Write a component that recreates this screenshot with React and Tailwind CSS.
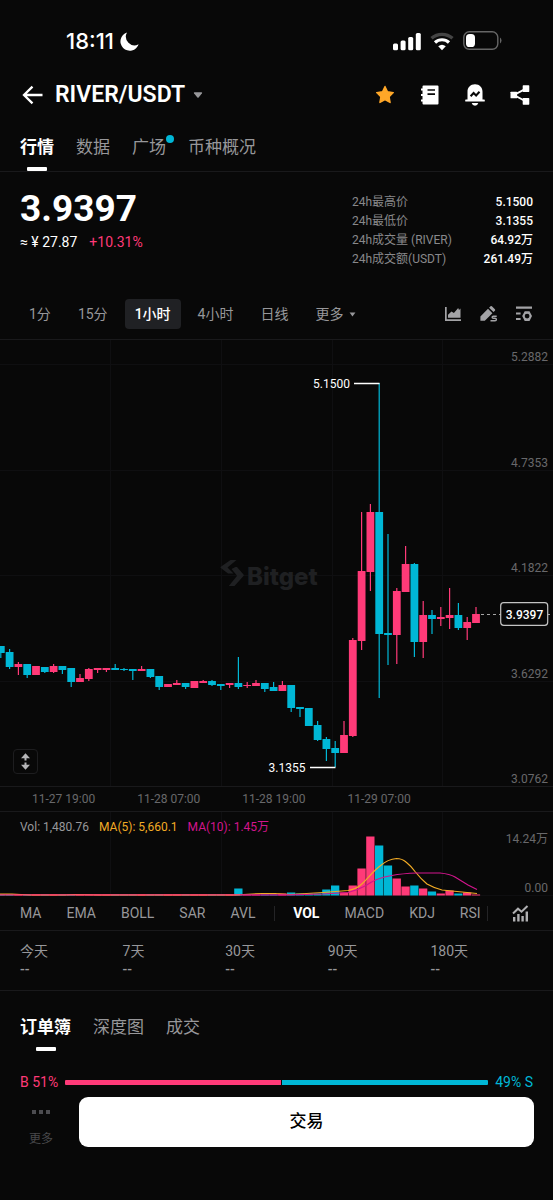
import { useState } from "react";

const UP = "#ff3a78";
const DOWN = "#00b7d6";
const STEP = 8.8;

// [up?, high, open/close top, open/close bottom, low, volume]
const candles = [
  [0, 307, 307, 314, 319, 1],
  [0, 310, 313, 328, 330, 1],
  [1, 323, 325, 328, 336, 1],
  [0, 325, 325, 336, 339, 1],
  [1, 327, 327, 336, 336, 1],
  [0, 328, 328, 333, 334, 1],
  [1, 325, 327, 333, 334, 1],
  [0, 327, 327, 331, 335, 1],
  [0, 329, 329, 343, 348, 1],
  [1, 335, 339, 343, 343, 1],
  [1, 329, 330, 340, 342, 1],
  [1, 329, 329, 331, 334, 1],
  [1, 329, 329, 331, 333, 1],
  [0, 325, 329, 331, 331, 1],
  [0, 329, 330, 331, 332, 1],
  [0, 330, 330, 332, 341, 1],
  [1, 327, 330, 332, 332, 1],
  [0, 330, 330, 338, 339, 1],
  [0, 337, 337, 348, 351, 1],
  [1, 345, 345, 348, 348, 1],
  [1, 341, 344, 346, 346, 1],
  [0, 344, 344, 348, 350, 1],
  [1, 342, 342, 349, 349, 1],
  [1, 341, 342, 344, 344, 1],
  [0, 341, 342, 346, 347, 1],
  [0, 345, 345, 347, 351, 1],
  [1, 344, 344, 346, 349, 1],
  [0, 318, 344, 348, 350, 7],
  [1, 343, 346, 347, 349, 1],
  [1, 341, 344, 347, 347, 1],
  [0, 344, 344, 350, 353, 1],
  [0, 343, 348, 352, 352, 1],
  [1, 342, 346, 352, 352, 2],
  [0, 346, 346, 369, 373, 3],
  [0, 368, 368, 370, 378, 2],
  [0, 369, 369, 387, 387, 2],
  [0, 382, 386, 401, 402, 2],
  [0, 398, 400, 410, 422, 6],
  [0, 402, 409, 414, 428, 10],
  [1, 382, 396, 414, 414, 3],
  [1, 299, 301, 397, 398, 10],
  [1, 173, 232, 302, 311, 27],
  [1, 165, 173, 233, 252, 59],
  [0, 44, 173, 295, 359, 50],
  [0, 195, 294, 296, 326, 30],
  [1, 249, 252, 296, 325, 17],
  [1, 207, 225, 253, 253, 9],
  [0, 224, 225, 303, 318, 10],
  [1, 262, 276, 303, 319, 7],
  [0, 271, 276, 280, 295, 4],
  [1, 268, 278, 280, 287, 2],
  [1, 249, 276, 279, 290, 5],
  [0, 264, 276, 289, 291, 2],
  [1, 278, 283, 289, 301, 3],
  [1, 268, 275, 284, 284, 1],
];

const intervals = ["1分", "15分", "1小时", "4小时", "日线"];

const stats = [
  { label: "24h最高价", value: "5.1500" },
  { label: "24h最低价", value: "3.1355" },
  { label: "24h成交量 (RIVER)", value: "64.92万" },
  { label: "24h成交额(USDT)", value: "261.49万" },
];

const priceLevels = [
  { label: "5.2882", y: 25 },
  { label: "4.7353", y: 131 },
  { label: "4.1822", y: 236 },
  { label: "3.6292", y: 342 },
  { label: "3.0762", y: 447 },
];

const StatusBar = () => (
  <div className="flex h-[68px] items-center justify-between pt-[14px] pr-[51px] pl-[66px]">
    <div className="flex items-center gap-[6px]">
      <span className="font-[Inter] text-[22px] leading-6 font-medium">
        18:11
      </span>
      <svg width="19" height="19" viewBox="0 0 19 19" fill="white">
        <path d="M7 0.5A9.3 9.3 0 1 0 18.6 12.2 8.6 8.6 0 0 1 7 0.5Z" />
      </svg>
    </div>
    <div className="flex items-center gap-[9px]">
      <svg width="28" height="19" viewBox="0 0 28 19" fill="white">
        <rect x="0" y="11.5" width="5" height="6.8" rx="1.5" />
        <rect x="7.6" y="8.5" width="5" height="9.8" rx="1.5" />
        <rect x="15.2" y="5" width="5" height="13.3" rx="1.5" />
        <rect x="22.8" y="1" width="5" height="17.3" rx="1.5" />
      </svg>
      <svg width="24" height="19" viewBox="0 0 24 19" fill="none">
        <path d="M1.500 6.300C7.500 1 16.500 1 22.500 6.300" stroke="#444" strokeWidth="3.400" />
        <path d="M5 10.500C9 6.800 15 6.800 19 10.500" stroke="white" strokeWidth="3.200" />
        <path d="M8.200 14.300Q12 11.300 15.800 14.300L12 18.300Z" fill="white" />
      </svg>
      <svg width="39" height="20" viewBox="0 0 39 20" fill="none">
        <rect x="0.8" y="0.8" width="34" height="17.500" rx="5.500" stroke="#666" strokeWidth="1.400" />
        <rect x="3" y="3" width="9" height="13" rx="3.600" fill="white" />
        <path d="M37 6.500v6q1.500-.8 1.500-3T37 6.500Z" fill="#666" />
      </svg>
    </div>
  </div>
);

const Header = () => (
  <header className="flex h-[54px] items-center justify-between pr-[23px] pl-[22px]">
    <div className="flex items-center">
      <button type="button" aria-label="返回" className="mr-3">
        <svg width="21" height="20" viewBox="0 0 21 20" fill="none" stroke="white" strokeWidth="2.300">
          <path d="M20.500 10H2.500M10.500 1.600 2 10l8.500 8.400" />
        </svg>
      </button>
      <h1 className="text-[23px] leading-7 font-semibold">RIVER/USDT</h1>
      <button type="button" aria-label="切换交易对" className="ml-2">
        <svg width="10" height="8" viewBox="0 0 11 8" fill="#97979a">
          <path d="M1.500 1h8q1 .3.400 1.100L6.200 6.700q-.7.700-1.400 0L1.100 2.100Q.5 1.300 1.500 1Z" />
        </svg>
      </button>
    </div>
    <div className="flex items-center gap-[25px]">
      <button type="button" aria-label="收藏">
        <svg width="20" height="20" viewBox="0 0 20 20" fill="#ffa728" stroke="#ffa728" strokeWidth="1.400" strokeLinejoin="round">
          <path d="M10 1.500l2.500 5.300 5.800.8-4.200 4.100 1 5.800-5.100-2.800-5.100 2.800 1-5.800-4.200-4.100 5.800-.8Z" />
        </svg>
      </button>
      <button type="button" aria-label="资料">
        <svg width="20" height="20" viewBox="0 0 20 20">
          <path d="M3.500.5h14q1 0 1 1v17q0 1-1 1h-14q-1 0-1-1v-2h-1.500v-2h1.500v-3.500h-1.500v-2h1.500v-3.500h-1.500v-2h1.500v-2q0-1 1-1Z" fill="white" />
          <path d="M7.500 5h7.500M7.500 9.200h7.500" stroke="#080808" strokeWidth="1.700" />
        </svg>
      </button>
      <button type="button" aria-label="价格提醒">
        <svg width="20" height="22" viewBox="0 0 20 22">
          <path d="M10 .3c-4.600 0-7.500 3.200-7.500 7.500v7.800h-1.700q-.6 0-.6.600v.8q0 .6.600.6h18.400q.6 0 .6-.6v-.8q0-.6-.6-.6h-1.700v-7.800c0-4.300-2.900-7.500-7.500-7.500Z" fill="white" />
          <path d="M6.700 19h6.600q-.7 2.700-3.300 2.700T6.700 19Z" fill="white" />
          <path d="M5.600 12.200l3-3.200 2.500 2.500 3.400-3.700" fill="none" stroke="#080808" strokeWidth="2" />
        </svg>
      </button>
      <button type="button" aria-label="分享">
        <svg width="20" height="20" viewBox="0 0 20 20">
          <path d="M16 3.700 4 10l12 6.500" fill="none" stroke="white" strokeWidth="1.900" />
          <g fill="white">
            <rect x="0.500" y="6.700" width="6.600" height="6.600" rx=".6" />
            <rect x="12.700" y="0.300" width="6.600" height="6.600" rx=".6" />
            <rect x="12.700" y="13.100" width="6.600" height="6.600" rx=".6" />
          </g>
        </svg>
      </button>
    </div>
  </header>
);

const Tabs = ({ items, active, onChange, dot }) => (
  <nav className="flex h-[49px] items-end gap-[22px] px-5 text-[17px] leading-6">
    {items.map((item) => (
      <button
        key={item}
        type="button"
        onClick={() => onChange(item)}
        className={
          item === active
            ? "flex flex-col items-center font-bold text-white"
            : "flex flex-col items-center text-[#97979a]"
        }
      >
        <span className="relative">
          {item}
          {item === dot && (
            <i className="absolute top-0 -right-2 size-2 rounded-full bg-[#00b7d6]" />
          )}
        </span>
        <span
          className={
            item === active
              ? "mt-2 h-1 w-5 rounded-[1px] bg-white"
              : "mt-2 h-1 w-5"
          }
        />
      </button>
    ))}
  </nav>
);

const Summary = () => (
  <section className="flex h-[127px] justify-between px-5 pt-[17px]">
    <div>
      <p className="text-[37px] leading-10 font-bold">3.9397</p>
      <p className="mt-[3px] flex gap-3 text-[14px] leading-5">
        <span>≈ ¥ 27.87</span>
        <span className="text-[#ff3a78]">+10.31%</span>
      </p>
    </div>
    <dl className="w-[181px] pt-1 text-[12px] leading-[19px]">
      {stats.map((s) => (
        <div key={s.label} className="flex justify-between">
          <dt className="text-[#88888b]">{s.label}</dt>
          <dd className="font-medium">{s.value}</dd>
        </div>
      ))}
    </dl>
  </section>
);

const IntervalBar = () => {
  const [interval, setInterval] = useState("1小时");

  return (
    <div className="flex h-10 items-start justify-between pr-[20px] pl-[19px]">
      <div className="flex gap-[7px] text-[14px] leading-[30px] text-[#97979a]">
        {intervals.map((i) => (
          <button
            key={i}
            type="button"
            onClick={() => setInterval(i)}
            className={
              i === interval
                ? "rounded-[4px] bg-[#202124] px-[10px] font-medium text-white"
                : "px-[10px]"
            }
          >
            {i}
          </button>
        ))}
        <button type="button" className="flex items-center gap-[6px] pl-[10px]">
          更多
          <svg width="7" height="5" viewBox="0 0 8 6" fill="currentColor">
            <path d="M.5.5h7L4 5.500Z" />
          </svg>
        </button>
      </div>
      <div className="flex h-[30px] items-center gap-[17px] text-[#a3a3a6]">
        <button type="button" aria-label="图表类型">
          <svg width="18" height="18" viewBox="0 0 18 18" fill="currentColor">
            <path d="M1 2h1.700v12.300h14.300v1.700h-16Z" />
            <path d="M4 12.800v-3l3.500-3.300 2.400 1.600 4.300-5 .8 1.800 1.500-1.300v9.200Z" />
          </svg>
        </button>
        <button type="button" aria-label="画线">
          <svg width="19" height="18" viewBox="0 0 19 18" fill="currentColor">
            <path d="M11.500 1.300q.7-.7 1.400 0l3 3q.7.700 0 1.400l-1.400 1.400-4.400-4.400ZM9 3.800l4.400 4.400-7.600 7.600H1.400v-4.400Z" />
            <path d="M17.700 11.300h-3.300q-1.300 0-1.300 1t1.300 1h1.600q1.400 0 1.400 1.200t-1.400 1.200h-4.500" fill="none" stroke="currentColor" strokeWidth="1.400" />
          </svg>
        </button>
        <button type="button" aria-label="图表设置">
          <svg width="18" height="18" viewBox="0 0 18 18" fill="currentColor">
            <path d="M1 1.500h16v2.200h-16ZM1 7.600h4.600v2H1ZM1 12.900h4.600v2H1Z" />
            <path fillRule="evenodd" d="M9.700 6.200h4.800l2.500 4.900-2.500 4.900h-4.800l-2.500-4.900ZM12.100 8.700a2.400 2.400 0 1 0 0 4.800 2.400 2.400 0 0 0 0-4.800Z" />
          </svg>
        </button>
      </div>
    </div>
  );
};

const PriceChart = () => (
  <div className="relative border-t border-[#19191b]">
    <svg viewBox="0 0 553 446" className="block w-full" fontSize="12">
      <g stroke="#0f0f11">
        {[110.5, 221.5, 332.5, 442.5].map((x) => (
          <path key={x} d={`M${x} 0V446`} />
        ))}
        {priceLevels.map((p) => (
          <path key={p.label} d={`M0 ${p.y - 0.5}H553`} />
        ))}
      </g>

      {/* watermark */}
      <g fill="#1f2022">
        <path d="M230.500 220h6l-9 7.500 6 6h-5.500l-7.200-5.400q-.7-.7 0-1.400Z" />
        <path d="M231.500 229l3-1.500 1-.5h1.500l6.500 7.500q.7.800 0 1.600L234.500 246h-5.700l8.300-10.300Z" />
        <text x="247" y="245" fontSize="24" fontWeight="800" fontFamily="Inter">
          Bitget
        </text>
      </g>

      <g fill="#68686b" textAnchor="end">
        {priceLevels.map((p) => (
          <text key={p.label} x="548" y={p.y - 4}>
            {p.label}
          </text>
        ))}
      </g>

      {candles.map(([up, high, top, bottom, low], i) => {
        const x = 0.8 + i * STEP;
        return (
          <g key={i} fill={up ? UP : DOWN}>
            <rect x={x - 0.6} y={high - 1} width="1.2" height={low - high} />
            <rect x={x - 3.9} y={top - 1} width="7.8" height={Math.max(bottom - top, 1)} />
          </g>
        );
      })}

      <g fill="white">
        <text x="313" y="48">5.1500</text>
        <text x="268.500" y="432">3.1355</text>
        <path d="M354 43.500h25.500M310 427.500h25.500" stroke="white" strokeWidth="1.300" />
      </g>

      <path d="M481 274.500h72" stroke="#a5a5a5" strokeDasharray="3 3" />
      <rect x="500.700" y="262.700" width="47" height="22.600" rx="3" fill="#080808" stroke="#c4c4c4" strokeWidth="1.200" />
      <text x="524.500" y="278.500" fill="white" fontWeight="500" textAnchor="middle">
        3.9397
      </text>
    </svg>
    <button
      type="button"
      aria-label="调整高度"
      className="absolute bottom-3 left-[13px] flex size-[25px] items-center justify-center rounded-[4px] border border-[#1d1d1f]"
    >
      <svg width="11" height="17" viewBox="0 0 11 17" fill="#b5b5b7">
        <path d="M5.500.3 10 5.300H6.500V7.600h-2V5.300H1ZM5.500 16.700 10 11.700H6.500V9.400h-2v2.300H1Z" />
      </svg>
    </button>
  </div>
);

const VolumeChart = () => (
  <div className="relative border-t border-[#19191b]">
    <svg viewBox="0 0 553 84" className="block w-full" fontSize="12">
      <g stroke="#0f0f11">
        {[110.5, 221.5, 332.5, 442.5].map((x) => (
          <path key={x} d={`M${x} 0V84`} />
        ))}
        <path d="M0 83.500H553" />
      </g>
      {candles.map(([up, , , , , vol], i) => (
        <rect
          key={i}
          x={i * STEP - 3.4}
          y={83.5 - vol}
          width="8.3"
          height={vol}
          fill={up ? UP : DOWN}
        />
      ))}
      <g fill="none" strokeWidth="1.200">
        <path
          d="M0 82 12 82 30 83H65L75 82.500 100 83H235L262 81.500 275 81.500 290 82.500 323 80.500 348 78.500Q356 77 360 73.500C366 69 372 60 380 54Q388 47 396.500 46.500 402 46.500 406 50 411 54 415 59.500 421 67 427 72 433 75.500 442 78L457 79.500 477 81.500"
          stroke="#f2ab25"
        />
        <path d="M0 82.800H240" stroke={UP} />
        <path
          d="M240 82.800H290L323 82 348 80.500Q358 78 366 73.500 376 66 392 63.500 402 61.500 417 61H440Q450 62 455 65L468 73 477 77.500"
          stroke="#d3158d"
        />
      </g>
      <g fill="#68686b" textAnchor="end">
        <text x="548" y="31">14.24万</text>
        <text x="548" y="80">0.00</text>
      </g>
    </svg>
    <p className="absolute top-[7px] left-5 flex gap-[10px] text-[12px] leading-4">
      <span className="text-[#97979a]">Vol: 1,480.76</span>
      <span className="text-[#f2ab25]">MA(5): 5,660.1</span>
      <span className="text-[#d3158d]">MA(10): 1.45万</span>
    </p>
  </div>
);

const IndicatorBar = () => {
  const [sub, setSub] = useState("VOL");

  return (
    <div className="flex h-[35px] items-center justify-between border-b border-[#19191b] pr-[24px] pl-5 text-[14px] text-[#97979a]">
      <div className="flex items-center gap-[25px]">
        {["MA", "EMA", "BOLL", "SAR", "AVL"].map((name) => (
          <button key={name} type="button">
            {name}
          </button>
        ))}
      </div>
      <span className="h-[15px] w-px bg-[#242426]" />
      <div className="flex items-center gap-[25px]">
        {["VOL", "MACD", "KDJ", "RSI"].map((name) => (
          <button
            key={name}
            type="button"
            onClick={() => setSub(name)}
            className={name === sub ? "font-bold text-white" : ""}
          >
            {name}
          </button>
        ))}
      </div>
      <div className="-ml-3 flex items-center gap-6">
        <span className="h-[15px] w-px bg-[#242426]" />
        <button type="button" aria-label="指标设置">
          <svg width="17" height="17" viewBox="0 0 17 17" fill="#b0b0b2">
            <path d="M1 8.500 6 3.700l3.500 3L15.500 1" fill="none" stroke="#b0b0b2" strokeWidth="2" />
            <path d="M1 12h2.400v4.500H1ZM5.200 9h2.400v7.500H5.200ZM9.400 11h2.400v5.500H9.400ZM13.600 6.500H16v10h-2.400Z" />
          </svg>
        </button>
      </div>
    </div>
  );
};

const Performance = () => (
  <dl className="grid h-[60px] grid-cols-5 border-b border-[#19191b] px-5 pt-[10px] text-[#97979a]">
    {["今天", "7天", "30天", "90天", "180天"].map((d) => (
      <div key={d}>
        <dt className="text-[14px] leading-5">{d}</dt>
        <dd className="text-[14px] leading-4 font-medium">--</dd>
      </div>
    ))}
  </dl>
);

const DepthRatio = () => (
  <div className="mt-[21px] flex h-5 items-center gap-[7px] px-5 text-[14px]">
    <span className="text-[#ff3a78]">B 51%</span>
    <div className="flex h-[5px] flex-1 gap-px">
      <div className="rounded-l-[1px] bg-[#ff3a78]" style={{ width: "51%" }} />
      <div className="flex-1 rounded-r-[1px] bg-[#00b7d6]" />
    </div>
    <span className="text-[#00b7d6]">49% S</span>
  </div>
);

const TradeBar = () => (
  <footer className="mt-[5px] flex items-stretch gap-[17px] pr-[19px] pl-5 pb-[53px]">
    <button
      type="button"
      className="flex w-[42px] flex-col items-center justify-between pt-[13px] text-[12px] leading-4 text-[#48484b]"
    >
      <svg width="20" height="4" viewBox="0 0 20 4" fill="#4c4c50">
        <path d="M1 0h4v4H1ZM8 0h4v4H8ZM15 0h4v4h-4Z" />
      </svg>
      更多
    </button>
    <button
      type="button"
      className="h-[50px] flex-1 rounded-[9px] bg-white text-[17px] font-medium text-black"
    >
      交易
    </button>
  </footer>
);

export default function App() {
  const [tab, setTab] = useState("行情");
  const [bookTab, setBookTab] = useState("订单簿");

  return (
    <div className="min-h-screen bg-[#080808] font-[Roboto,'Noto_Sans_CJK_SC',sans-serif] text-white">
      <StatusBar />
      <Header />
      <div className="border-b border-[#19191b]">
        <Tabs
          items={["行情", "数据", "广场", "币种概况"]}
          active={tab}
          onChange={setTab}
          dot="广场"
        />
      </div>
      <Summary />
      <IntervalBar />
      <PriceChart />
      <div className="flex h-[25px] items-center gap-[42px] border-t border-[#19191b] pl-8 text-[12px] text-[#68686b]">
        <span>11-27 19:00</span>
        <span>11-28 07:00</span>
        <span>11-28 19:00</span>
        <span>11-29 07:00</span>
      </div>
      <VolumeChart />
      <IndicatorBar />
      <Performance />
      <div className="pt-[11px]">
        <Tabs
          items={["订单簿", "深度图", "成交"]}
          active={bookTab}
          onChange={setBookTab}
        />
      </div>
      <DepthRatio />
      <TradeBar />
    </div>
  );
}
